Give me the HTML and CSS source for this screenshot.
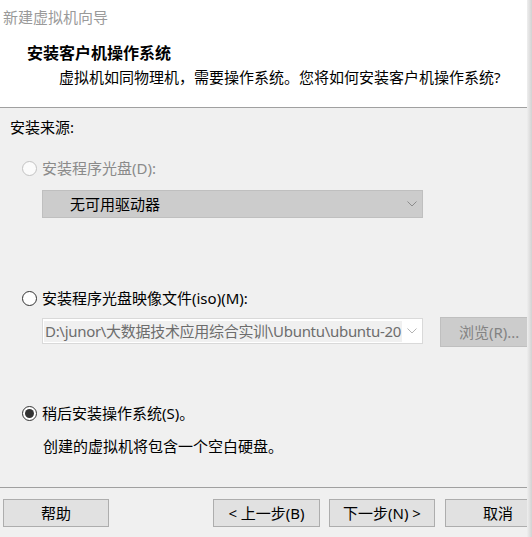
FILE: index.html
```html
<!DOCTYPE html>
<html lang="zh-CN">
<head>
<meta charset="utf-8">
<title>新建虚拟机向导</title>
<link rel="stylesheet" href="styles.css">
</head>
<body>
<div class="screen">
  <div class="window">
    <header class="header">
      <div class="title">新建虚拟机向导</div>
      <div class="heading">安装客户机操作系统</div>
      <div class="desc">虚拟机如同物理机，需要操作系统。您将如何安装客户机操作系统?</div>
    </header>
    <main class="content">
      <div class="label">安装来源:</div>

      <div class="option option-first disabled">
        <span class="radio radio-disabled"></span>
        <span>安装程序光盘(D):</span>
      </div>
      <div class="select select-disabled">
        <span class="select-text">无可用驱动器</span>
        <svg class="chev" width="10" height="6" viewBox="0 0 10 6"><path d="M0.5 0.5 L5 5 L9.5 0.5" fill="none" stroke="#8c8c8c" stroke-width="1"/></svg>
      </div>

      <div class="option option-second">
        <span class="radio"></span>
        <span>安装程序光盘映像文件(iso)(M):</span>
      </div>
      <div class="file-row">
        <div class="select select-input">
          <span class="path">D:\junor\大数据技术应用综合实训\Ubuntu\ubuntu-20</span>
          <svg class="chev chev-light" width="10" height="6" viewBox="0 0 10 6"><path d="M0.5 0.5 L5 5 L9.5 0.5" fill="none" stroke="#b4b4b4" stroke-width="1"/></svg>
        </div>
        <div class="browse">浏览(R)...</div>
      </div>

      <div class="option option-third">
        <span class="radio radio-checked"></span>
        <span>稍后安装操作系统(S)。</span>
      </div>
      <div class="note">创建的虚拟机将包含一个空白硬盘。</div>
    </main>
    <footer class="footer">
      <div class="btn btn-help">帮助</div>
      <div class="btn btn-back">&lt; 上一步(B)</div>
      <div class="btn btn-next">下一步(N) &gt;</div>
      <div class="btn btn-cancel">取消</div>
    </footer>
  </div>
  <div class="edge"></div>
</div>
</body>
</html>
```

FILE: styles.css
```css
html, body {
  margin: 0;
  padding: 0;
}

body {
  width: 532px;
  height: 537px;
  overflow: hidden;
  background: #f0f0f0;
  font-family: "Noto Sans", "Noto Sans CJK SC", sans-serif;
  font-size: 15px;
  color: #000;
}

.screen {
  display: flex;
  width: 532px;
  height: 537px;
}

.window {
  width: 527px;
  height: 537px;
  display: flex;
  flex-direction: column;
  overflow: hidden;
  background: #f0f0f0;
}

.edge {
  width: 5px;
  height: 537px;
  background: linear-gradient(to right, #eeeeee, #d2d2d2);
}

.header {
  height: 107px;
  flex: none;
  background: #ffffff;
  border-bottom: 1px solid #a0a0a0;
  box-sizing: content-box;
}

.title {
  padding-top: 7px;
  padding-left: 3px;
  line-height: 20px;
  color: #9a9a9a;
}

.heading {
  margin-top: 16px;
  padding-left: 27px;
  line-height: 20px;
  font-size: 16px;
  font-weight: bold;
}

.desc {
  margin-top: 4px;
  padding-left: 59px;
  line-height: 20px;
}

.content {
  flex: 1;
  padding-top: 9px;
  padding-left: 10px;
}

.label {
  line-height: 20px;
}

.option {
  display: flex;
  align-items: center;
  gap: 5px;
  padding-left: 12px;
  line-height: 20px;
}

.option.disabled {
  color: #8a8a8a;
}

.option-first {
  margin-top: 21px;
}

.option-second {
  margin-top: 70px;
}

.option-third {
  margin-top: 56px;
}

.radio {
  width: 15px;
  height: 15px;
  box-sizing: border-box;
  border: 1px solid #333333;
  border-radius: 50%;
  background: #ffffff;
  flex: none;
  display: flex;
  align-items: center;
  justify-content: center;
}

.radio-disabled {
  border-color: #c2c2c2;
  background: #fbfbfb;
}

.radio-checked::after {
  content: "";
  width: 9px;
  height: 9px;
  border-radius: 50%;
  background: #333333;
}

.select {
  margin-left: 32px;
  width: 381px;
  flex: none;
  box-sizing: border-box;
  display: flex;
  align-items: center;
  justify-content: space-between;
}

.select-disabled {
  margin-top: 12px;
  height: 28px;
  background: #cccccc;
  border: 1px solid #bfbfbf;
  padding-left: 27px;
  padding-right: 5px;
}

.select-text {
  line-height: 20px;
}

.chev {
  flex: none;
}

.file-row {
  margin-top: 9px;
  display: flex;
  align-items: flex-start;
}

.select-input {
  margin-top: 1px;
  height: 26px;
  background: #ffffff;
  border: 1px solid #d9d9d9;
  padding-left: 1px;
  padding-right: 5px;
}

.path {
  background: #f0f0f0;
  color: #6d6d6d;
  line-height: 21px;
  padding-left: 1px;
  padding-right: 1px;
  white-space: nowrap;
  letter-spacing: -0.3px;
}

.browse {
  margin-left: 17px;
  width: 93px;
  height: 30px;
  flex: none;
  box-sizing: border-box;
  background: #cccccc;
  border: 1px solid #bfbfbf;
  color: #838383;
  line-height: 28px;
  padding-left: 18px;
  white-space: nowrap;
}

.note {
  margin-top: 13px;
  padding-left: 33px;
  line-height: 20px;
}

.footer {
  flex: none;
  height: 38px;
  border-top: 1px solid #a0a0a0;
  display: flex;
  align-items: flex-start;
  padding-top: 11px;
  box-sizing: content-box;
}

.btn {
  flex: none;
  height: 28px;
  box-sizing: border-box;
  background: #e1e1e1;
  border: 1px solid #adadad;
  text-align: center;
  line-height: 26px;
  white-space: nowrap;
}

.btn-help {
  margin-left: 3px;
  width: 106px;
}

.btn-back {
  margin-left: 104px;
  width: 107px;
}

.btn-next {
  margin-left: 9px;
  width: 106px;
}

.btn-cancel {
  margin-left: 10px;
  width: 106px;
}
```
